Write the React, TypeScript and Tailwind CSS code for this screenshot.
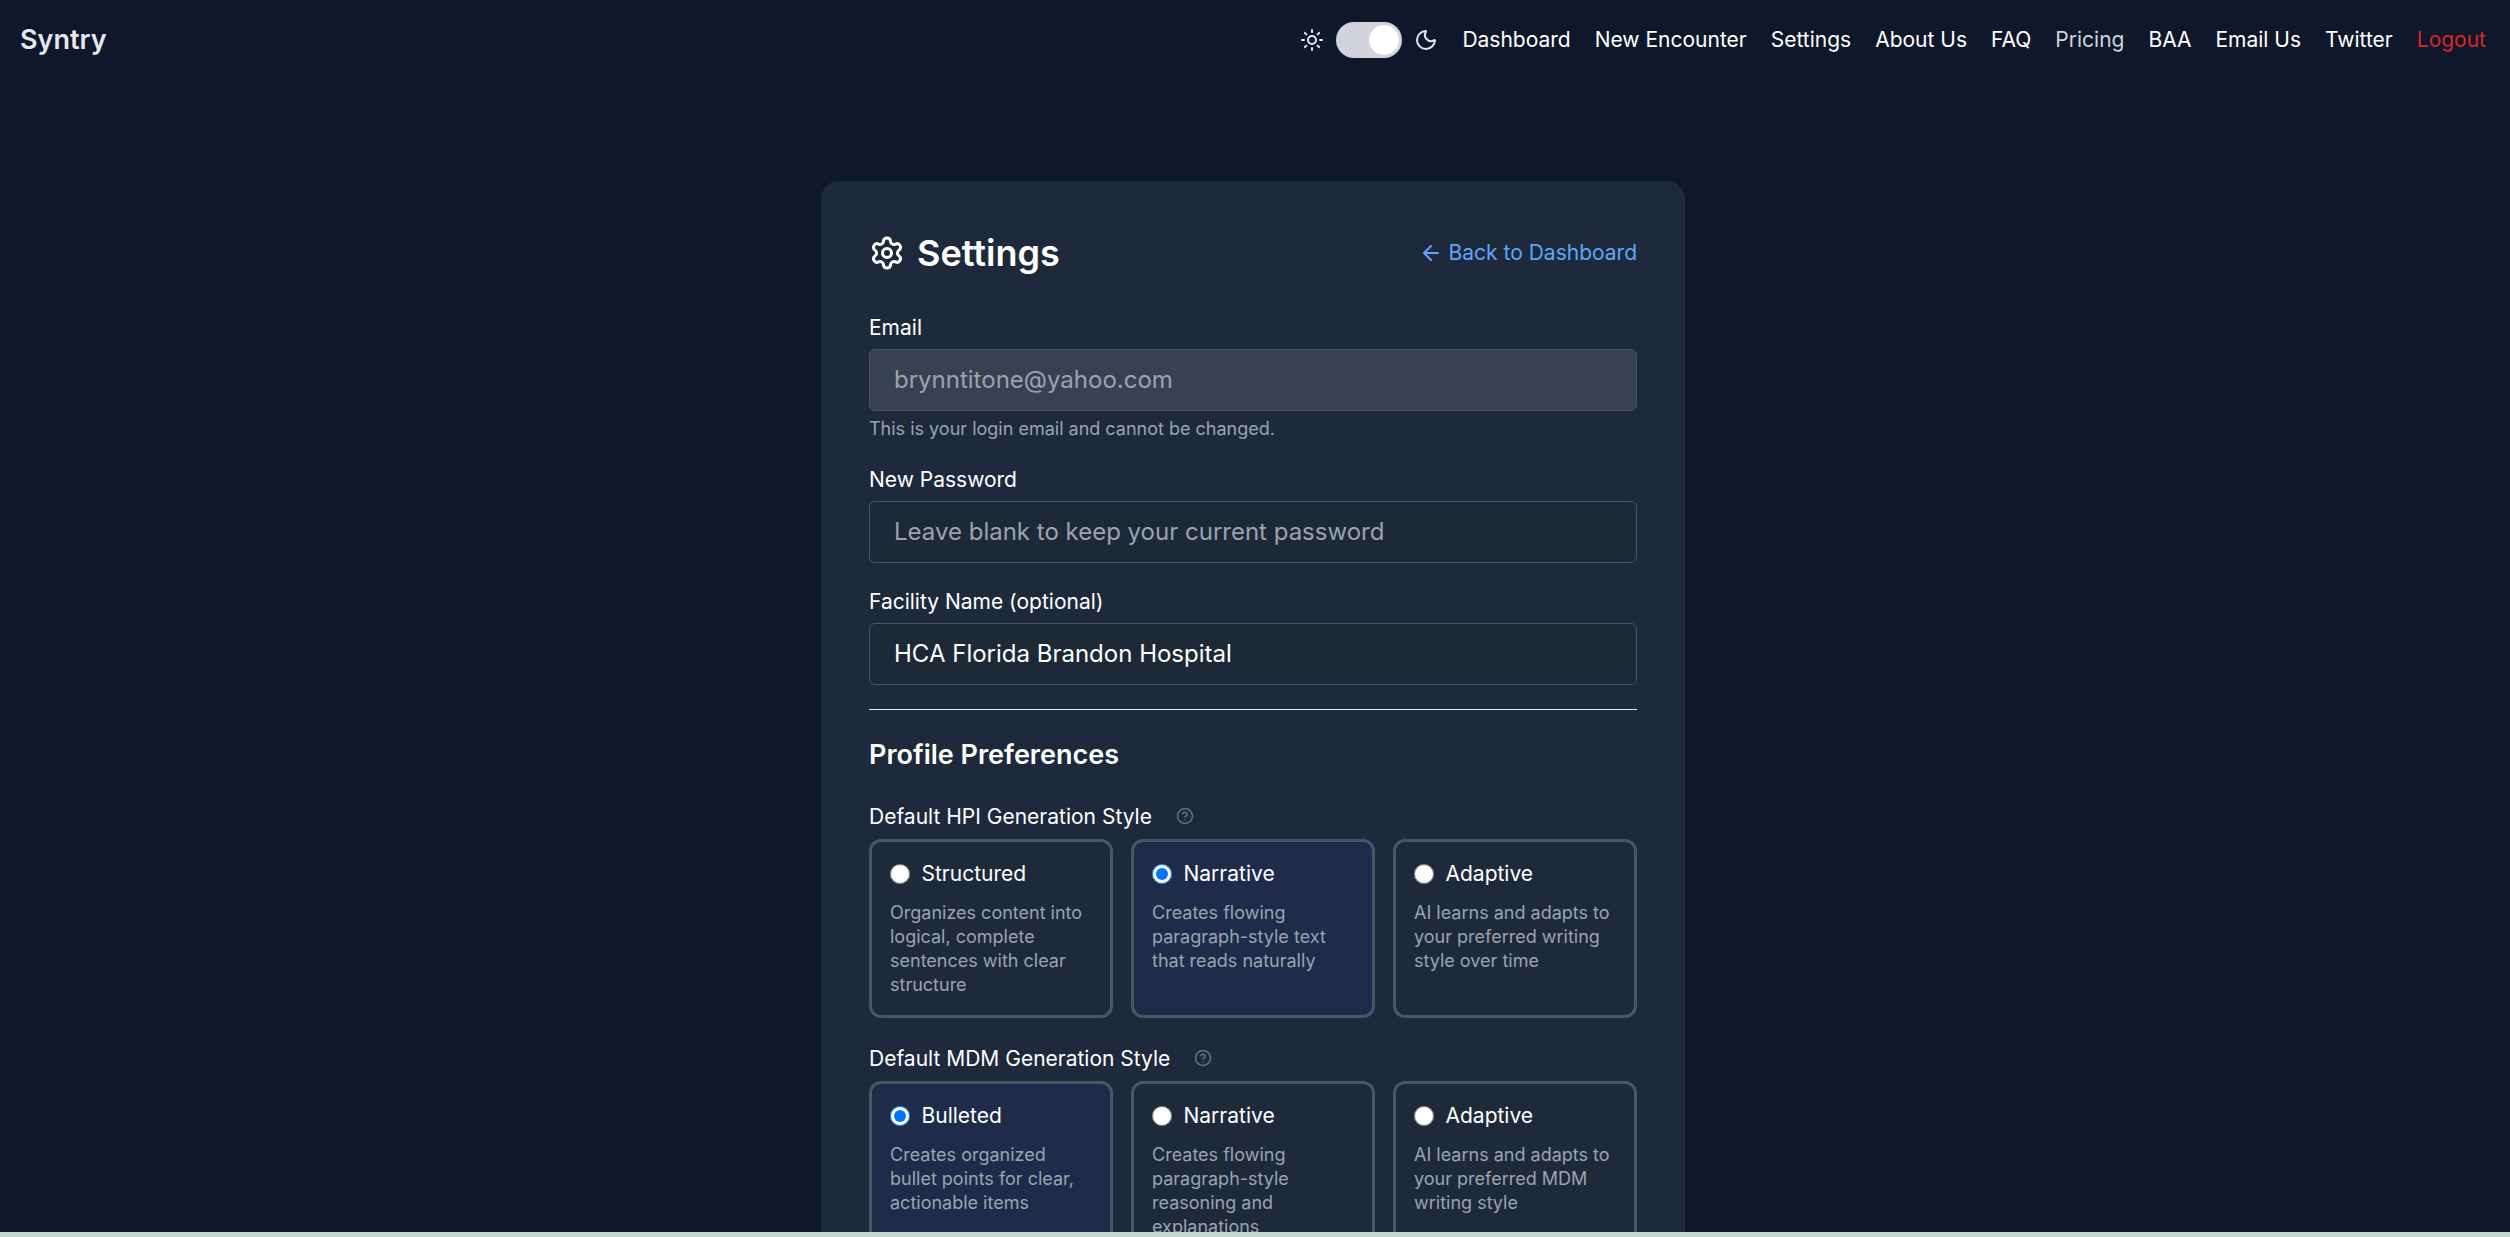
import { ArrowLeft, CircleHelp, Moon, Settings, Sun } from "lucide-react";

interface StyleOption {
  title: string;
  description: string;
  selected?: boolean;
}

const navLinks = ["Dashboard", "New Encounter", "Settings", "About Us", "FAQ", "Pricing", "BAA", "Email Us", "Twitter", "Logout"];

const hpiOptions: StyleOption[] = [
  { title: "Structured", description: "Organizes content into logical, complete sentences with clear structure" },
  { title: "Narrative", description: "Creates flowing paragraph-style text that reads naturally", selected: true },
  { title: "Adaptive", description: "AI learns and adapts to your preferred writing style over time" },
];

const mdmOptions: StyleOption[] = [
  { title: "Bulleted", description: "Creates organized bullet points for clear, actionable items", selected: true },
  { title: "Narrative", description: "Creates flowing paragraph-style reasoning and explanations" },
  { title: "Adaptive", description: "AI learns and adapts to your preferred MDM writing style" },
];

function navColor(link: string) {
  if (link === "Logout") return "text-[#dc2626]";
  if (link === "Pricing") return "text-[#d1d5db]";
  return "text-white";
}

function OptionCard({ option, group }: { option: StyleOption; group: string }) {
  return (
    <div
      className={`h-[179px] rounded-[12px] border-[3px] border-[#4b5563] px-[18px] pt-[17px] ${
        option.selected ? "bg-[#1e2b4b]" : "bg-[#1e293a]"
      }`}
    >
      <div className="flex h-[30px] items-center gap-[12px] text-[21px] text-white">
        <input type="radio" name={group} readOnly checked={!!option.selected} className="m-0 h-[19.5px] w-[19.5px] shrink-0" />
        {option.title}
      </div>
      <p className="mt-[12px] text-[18px] leading-[24px] text-[#9ca3af]">{option.description}</p>
    </div>
  );
}

function StyleGroup({ label, options }: { label: string; options: StyleOption[] }) {
  return (
    <div>
      <div className="flex h-[30px] items-center gap-[24px] text-[21px] text-white">
        {label}
        <CircleHelp className="h-[18px] w-[18px] -translate-y-[1px] text-[#6b7280]" strokeWidth={2} />
      </div>
      <div className="mt-[7px] grid grid-cols-3 gap-[18px]">
        {options.map((option) => (
          <OptionCard key={option.title} option={option} group={label} />
        ))}
      </div>
    </div>
  );
}

function Field({ label, value, placeholder, disabled }: { label: string; value?: string; placeholder?: string; disabled?: boolean }) {
  return (
    <div>
      <div className="h-[30px] text-[21px] leading-[30px] text-white">{label}</div>
      <input
        readOnly
        value={value}
        placeholder={placeholder}
        className={`mt-[6px] block h-[62px] w-full rounded-[6px] border-[1.5px] border-[#4b5563] px-[24px] pb-[1px] text-[24px] outline-none placeholder:text-[#9ca3af] ${
          disabled ? "bg-[#374151] text-[#9ca3af]" : "bg-[#1e2937] text-white"
        }`}
      />
    </div>
  );
}

export default function App() {
  return (
    <div className="flex h-[1237px] w-full flex-col overflow-hidden bg-[#0f172a] font-['Inter',sans-serif]">
      <nav className="flex h-[80px] shrink-0 items-center justify-between pr-[24px] pl-[20px]">
        <span className="text-[27px] font-semibold text-[#e5e7eb]">Syntry</span>
        <div className="flex items-center gap-[24px]">
          <div className="flex items-center gap-[12px]">
            <Sun className="h-[24px] w-[24px] text-[#e5e7eb]" />
            <span className="flex h-[36px] w-[66px] items-center justify-end rounded-full bg-[#d1d5db] px-[3px]">
              <span className="h-[30px] w-[30px] rounded-full bg-white" />
            </span>
            <Moon className="h-[24px] w-[24px] text-[#e5e7eb]" />
          </div>
          {navLinks.map((link) => (
            <a key={link} className={`text-[21px] ${navColor(link)}`}>
              {link}
            </a>
          ))}
        </div>
      </nav>

      <main className="min-h-0 flex-1 overflow-hidden pt-[101px] pr-[4px]">
        <section className="mx-auto w-[864px] rounded-[18px] bg-[#1e293b] p-[48px]">
          <header className="flex h-[48px] items-center justify-between">
            <h1 className="flex items-center gap-[12px] text-[36px] font-semibold text-white">
              <Settings className="h-[36px] w-[36px]" />
              Settings
            </h1>
            <a className="flex items-center gap-[6px] text-[21px] text-[#60a5fa]">
              <ArrowLeft className="h-[24px] w-[24px]" />
              Back to Dashboard
            </a>
          </header>

          <div className="mt-[36px]">
            <Field label="Email" value="brynntitone@yahoo.com" disabled />
            <p className="mt-[6px] text-[18px] leading-[24px] text-[#9ca3af]">This is your login email and cannot be changed.</p>
          </div>
          <div className="mt-[24px]">
            <Field label="New Password" placeholder="Leave blank to keep your current password" />
          </div>
          <div className="mt-[24px]">
            <Field label="Facility Name (optional)" value="HCA Florida Brandon Hospital" />
          </div>

          <hr className="mt-[24px] border-t-[1.5px] border-[#e5e7eb]" />

          <h2 className="mt-[24px] text-[27px] leading-[42px] font-semibold text-white">Profile Preferences</h2>

          <div className="mt-[26px]">
            <StyleGroup label="Default HPI Generation Style" options={hpiOptions} />
          </div>
          <div className="mt-[26px]">
            <StyleGroup label="Default MDM Generation Style" options={mdmOptions} />
          </div>
        </section>
      </main>

      <div className="h-[5px] shrink-0 bg-[#c8d6d2]" />
    </div>
  );
}
